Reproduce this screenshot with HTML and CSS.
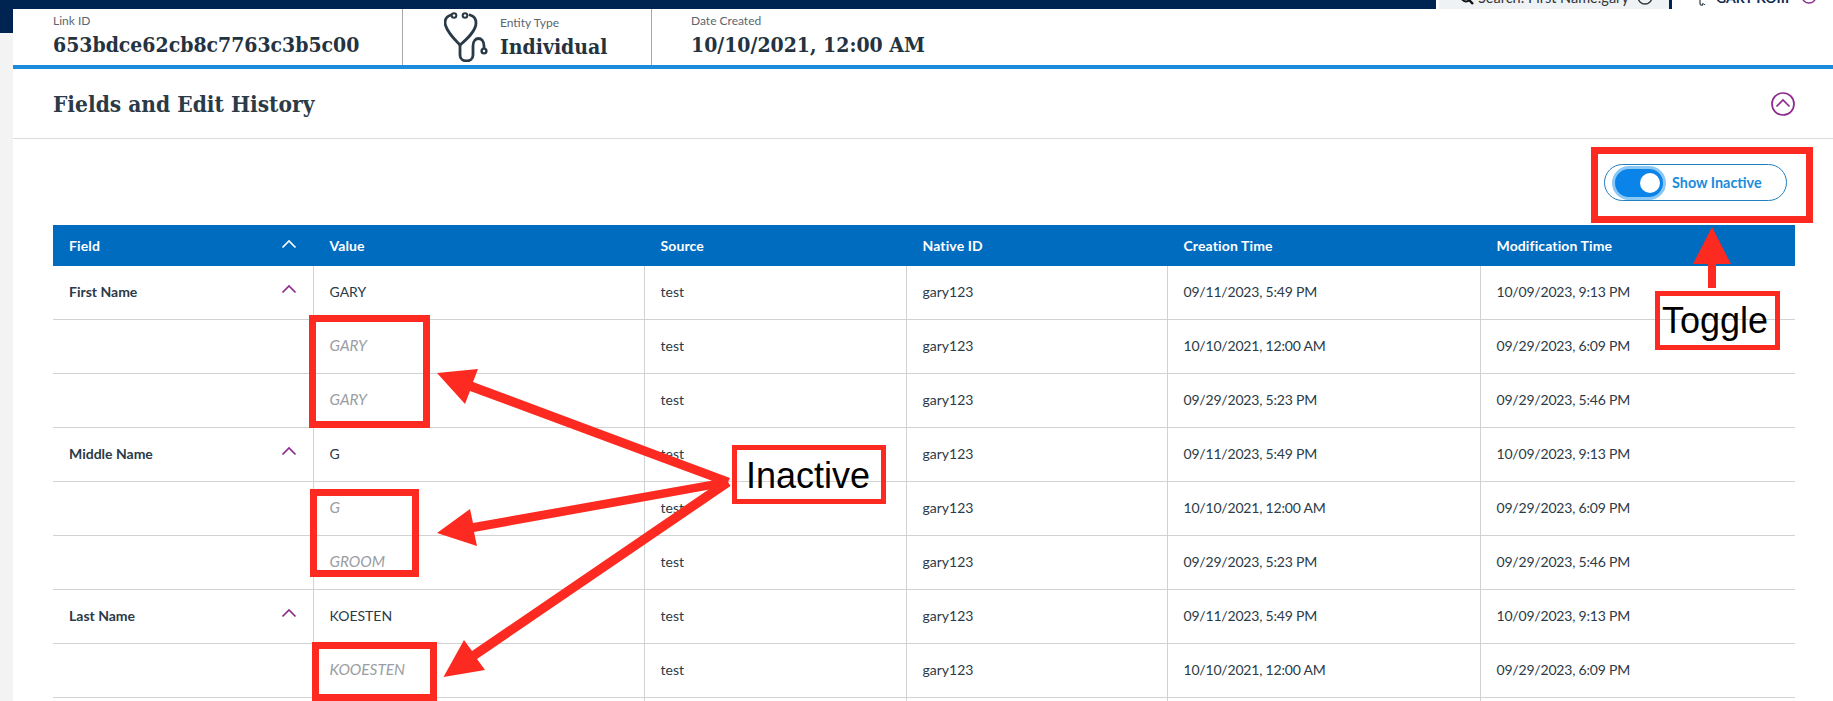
FILE: index.html
```html
<!DOCTYPE html>
<html lang="en">
<head>
<meta charset="utf-8">
<title>Fields and Edit History</title>
<link rel="stylesheet" href="styles.css">
</head>
<body>
<header class="topbar">
  <div class="topbar-fill"></div>
  <div class="search">
    <svg class="search-icon" viewBox="0 0 14 14" width="14" height="14"><circle cx="6" cy="6" r="4.4" fill="none" stroke="#111" stroke-width="2"/><path d="M9 9l4 4" stroke="#111" stroke-width="2.4"/></svg>
    <span class="search-text">Search: First Name:gary</span>
    <svg class="search-info" viewBox="0 0 16 16" width="16" height="16"><circle cx="8" cy="8" r="7" fill="none" stroke="#333" stroke-width="1.4"/></svg>
  </div>
  <div class="topbar-sep"></div>
  <div class="user">
    <svg class="user-icon" viewBox="0 0 8 8" width="8" height="8"><path d="M2 0v4c0 3 3 3 3 0M6.500 5v1" fill="none" stroke="#2b3a47" stroke-width="1.200"/></svg>
    <span class="user-name">GARY KOIII</span>
    <svg class="user-circle" viewBox="0 0 16 16" width="16" height="16"><circle cx="8" cy="8" r="7" fill="none" stroke="#8e2a8e" stroke-width="1.400"/></svg>
  </div>
</header>

<div class="shell">
  <aside class="rail"><div class="rail-top"></div></aside>
  <main class="main">
    <section class="summary">
      <div class="summary-cell cell-link">
        <div class="summary-label">Link ID</div>
        <div class="summary-value">653bdce62cb8c7763c3b5c00</div>
      </div>
      <div class="summary-cell cell-entity">
        <svg class="steth" viewBox="0 0 44 50" width="44" height="50">
          <g fill="none" stroke="#2b3a47" stroke-width="2.800" stroke-linecap="round">
            <path d="M7 3C3 4 1 7 1 11C2 19 10 27 16 33C23 27 32 19 32 11C32 7 30 4 26 3"/>
            <path d="M16 33V43C16 51 29 51 29 43V34C29 24 40 24 40 34V38"/>
          </g>
          <g fill="#2b3a47"><circle cx="10" cy="3.500" r="3.300"/><circle cx="21" cy="3.500" r="3.300"/><circle cx="40" cy="39" r="3.600"/></g>
          <g fill="#fff"><circle cx="10" cy="3.500" r="1.200"/><circle cx="21" cy="3.500" r="1.200"/><circle cx="40" cy="39" r="1.200"/></g>
        </svg>
        <div>
          <div class="summary-label">Entity Type</div>
          <div class="summary-value">Individual</div>
        </div>
      </div>
      <div class="summary-cell cell-date">
        <div class="summary-label">Date Created</div>
        <div class="summary-value">10/10/2021, 12:00 AM</div>
      </div>
    </section>

    <section class="panel-head">
      <h2 class="panel-title">Fields and Edit History</h2>
      <svg class="panel-toggle" viewBox="0 0 24 24" width="24" height="24"><circle cx="12" cy="12" r="11" fill="none" stroke="#8e2a8e" stroke-width="1.700"/><path d="M5.500 14.500L12 8l6.500 6.500" fill="none" stroke="#8e2a8e" stroke-width="1.700"/></svg>
    </section>

    <div class="toolbar">
      <div class="pill">
        <span class="switch"><span class="thumb"></span></span>
        <span class="pill-label">Show Inactive</span>
      </div>
    </div>

    <table class="fields">
      <colgroup>
        <col class="c-field"><col class="c-value"><col class="c-source"><col class="c-native"><col class="c-created"><col class="c-modified">
      </colgroup>
      <thead>
        <tr>
          <th><span class="field-cell">Field<svg class="chev" viewBox="0 0 16 10" width="16" height="10"><path d="M1.500 8.500L8 2l6.500 6.500" fill="none" stroke="#fff" stroke-width="1.700"/></svg></span></th>
          <th>Value</th><th>Source</th><th>Native ID</th><th>Creation Time</th><th>Modification Time</th>
        </tr>
      </thead>
      <tbody>
        <tr>
          <td class="name"><span class="field-cell">First Name<svg class="chev" viewBox="0 0 16 10" width="16" height="10"><path d="M1.500 8.500L8 2l6.500 6.500" fill="none" stroke="#8e2a8e" stroke-width="1.700"/></svg></span></td>
          <td>GARY</td><td>test</td><td>gary123</td><td>09/11/2023, 5:49 PM</td><td>10/09/2023, 9:13 PM</td>
        </tr>
        <tr><td></td><td class="inactive">GARY</td><td>test</td><td>gary123</td><td>10/10/2021, 12:00 AM</td><td>09/29/2023, 6:09 PM</td></tr>
        <tr><td></td><td class="inactive">GARY</td><td>test</td><td>gary123</td><td>09/29/2023, 5:23 PM</td><td>09/29/2023, 5:46 PM</td></tr>
        <tr>
          <td class="name"><span class="field-cell">Middle Name<svg class="chev" viewBox="0 0 16 10" width="16" height="10"><path d="M1.500 8.500L8 2l6.500 6.500" fill="none" stroke="#8e2a8e" stroke-width="1.700"/></svg></span></td>
          <td>G</td><td>test</td><td>gary123</td><td>09/11/2023, 5:49 PM</td><td>10/09/2023, 9:13 PM</td>
        </tr>
        <tr><td></td><td class="inactive">G</td><td>test</td><td>gary123</td><td>10/10/2021, 12:00 AM</td><td>09/29/2023, 6:09 PM</td></tr>
        <tr><td></td><td class="inactive">GROOM</td><td>test</td><td>gary123</td><td>09/29/2023, 5:23 PM</td><td>09/29/2023, 5:46 PM</td></tr>
        <tr>
          <td class="name"><span class="field-cell">Last Name<svg class="chev" viewBox="0 0 16 10" width="16" height="10"><path d="M1.500 8.500L8 2l6.500 6.500" fill="none" stroke="#8e2a8e" stroke-width="1.700"/></svg></span></td>
          <td>KOESTEN</td><td>test</td><td>gary123</td><td>09/11/2023, 5:49 PM</td><td>10/09/2023, 9:13 PM</td>
        </tr>
        <tr><td></td><td class="inactive">KOOESTEN</td><td>test</td><td>gary123</td><td>10/10/2021, 12:00 AM</td><td>09/29/2023, 6:09 PM</td></tr>
        <tr><td></td><td></td><td></td><td></td><td></td><td></td></tr>
      </tbody>
    </table>
  </main>
</div>

<svg class="annotations" viewBox="0 0 1833 701" width="1833" height="701">
  <g fill="none" stroke="#fc2a20" stroke-width="7">
    <rect x="312.500" y="318.500" width="114" height="106"/>
    <rect x="313.500" y="492.500" width="102" height="81"/>
    <rect x="315.500" y="645.500" width="118" height="52"/>
    <rect x="1594.500" y="150.500" width="215" height="69"/>
  </g>
  <g fill="#fc2a20">
    <polygon points="437,373 478,369 473,382 730,478 726,486 470,391 465,404"/>
    <polygon points="437,533 470,509 473,523 727,478 729,486 474,532 477,546"/>
    <polygon points="443.500,677 464,640 472,651 725.500,478 730.500,486 477,659 485,670"/>
    <polygon points="1712,227 1731,264 1716,264 1716,288 1708,288 1708,264 1693,264"/>
  </g>
  <g fill="none" stroke="#fc2a20" stroke-width="5">
    <rect x="734.500" y="447.500" width="149" height="54"/>
    <rect x="1657.500" y="293.500" width="120" height="54"/>
  </g>
  <g class="note">
    <text x="746" y="488">Inactive</text>
    <text x="1662" y="333">Toggle</text>
  </g>
</svg>
</body>
</html>
```
FILE: styles.css
```css
* { box-sizing: border-box; }
html, body { margin: 0; height: 701px; overflow: hidden; }
body {
  position: relative;
  background: #f3f3f3;
  font-family: "Lato", "Noto Sans", sans-serif;
  font-size: 14px;
  color: #2b3a47;
}
.topbar { display: flex; height: 9px; background: #fff; overflow: hidden; }
.topbar-fill { flex: 1; background: #002451; margin-right: 3px; }
.topbar-sep { width: 3px; background: #002451; }
.search {
  width: 230px; background: #eef2f5; display: flex; align-items: flex-end;
  padding: 0 0 2px 21px; font-size: 14.500px; line-height: 18px; color: #333;
}
.search-icon { flex: none; margin-bottom: 2px; }
.search-text { margin-left: 4px; white-space: nowrap; }
.search-info { flex: none; margin-left: 8px; margin-bottom: 2px; }
.user {
  width: 161px; display: flex; align-items: flex-end;
  padding: 0 0 2px 26px; font-size: 14px; line-height: 18px; font-weight: 700; color: #0c2b52;
}
.user-icon { flex: none; }
.user-name { margin-left: 10px; white-space: nowrap; width: 82px; }
.user-circle { flex: none; margin-left: 3px; margin-bottom: 3px; }

.shell { display: flex; height: 692px; }
.rail { width: 13px; flex: none; }
.rail-top { height: 24px; background: #002451; }
.main { flex: 1; background: #fff; }

.summary { display: flex; height: 60px; border-bottom: 4px solid #1a8cdb; }
.summary-cell { height: 56px; border-right: 1px solid #a4a8ab; }
.cell-link { width: 390px; padding: 3px 0 0 40px; }
.cell-entity { width: 249px; display: flex; align-items: flex-start; padding: 3px 0 0 41px; gap: 12px; }
.cell-date { flex: 1; border-right: 0; padding: 3px 0 0 39px; }
.summary-label { font-size: 12px; line-height: 18px; color: #5b6670; }
.summary-value {
  font-family: "DejaVu Serif Condensed", "DejaVu Serif", "Liberation Serif", serif;
  font-weight: 700; font-size: 21px; line-height: 30px; color: #24333f; white-space: nowrap;
}
.cell-entity .summary-label { margin-top: 2px; }

.panel-head {
  height: 70px; display: flex; align-items: center; justify-content: space-between;
  padding: 0 0 0 40px; border-bottom: 1px solid #dcdcdc;
}
.panel-title {
  margin: 0; font-family: "DejaVu Serif Condensed", "DejaVu Serif", "Liberation Serif", serif;
  font-weight: 700; font-size: 22.500px; color: #2b3a47;
}
.panel-toggle { margin-right: 38px; }

.toolbar { height: 86px; display: flex; justify-content: flex-end; padding: 25px 46px 0 0; }
.pill {
  width: 183px; height: 37px; border: 1px solid #1f7fbf; border-radius: 19px;
  display: flex; align-items: center; padding-left: 7px;
}
.switch {
  width: 54px; height: 34px; border-radius: 17px; background: #0a84e8;
  border: 3px solid #8cc8f5; display: flex; align-items: center; justify-content: flex-end; padding-right: 3px;
}
.thumb { width: 20px; height: 20px; border-radius: 50%; background: #fff; }
.pill-label { margin-left: 6px; font-weight: 700; font-size: 14.400px; color: #1a8cdb; white-space: nowrap; }

.fields { border-collapse: collapse; table-layout: fixed; width: 1742px; margin-left: 40px; }
.c-field { width: 260px; } .c-value { width: 331px; } .c-source { width: 262px; }
.c-native { width: 261px; } .c-created { width: 313px; } .c-modified { width: 315px; }
.fields th {
  height: 41px; padding: 0 16px 0 16.500px; background: #006cbf; color: #fff;
  font-weight: 700; font-size: 14px; letter-spacing: .12px; text-align: left;
}
.fields th:first-child { padding-left: 16px; }
.fields td {
  height: 54px; padding: 0 16px 2px; font-size: 14px;
  border-bottom: 1px solid #d0d2d4; border-left: 1px solid #d0d2d4; white-space: nowrap;
}
.fields tbody tr:first-child td { height: 53px; }
.fields td:first-child { border-left: 0; }
.fields td:nth-child(n+5) { letter-spacing: -.19px; }
.fields td.name { font-weight: 700; }
.fields td.inactive { font-style: italic; font-size: 15.400px; color: #9a9ea3; }
.field-cell { display: flex; align-items: center; justify-content: space-between; }
.chev { flex: none; margin-top: -4px; }

.annotations { position: absolute; left: 0; top: 0; pointer-events: none; }
.note { font-family: "Liberation Sans", Arial, sans-serif; font-size: 36px; fill: #000; }
```
